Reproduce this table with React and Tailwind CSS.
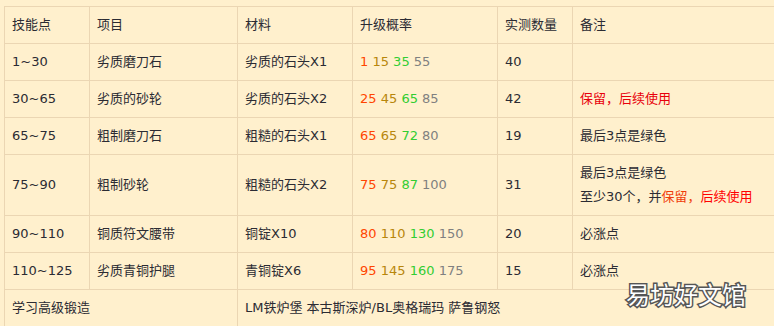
import React from "react";

const O = "text-[#ff4500]";
const Y = "text-[#b8860b]";
const G = "text-[#32cd32]";
const Gr = "text-[#808080]";
const R = "text-[#e8000b]";

function Prob({ v }) {
  return (
    <span>
      <span className={O}>{v[0]}</span> <span className={Y}>{v[1]}</span>{" "}
      <span className={G}>{v[2]}</span> <span className={Gr}>{v[3]}</span>
    </span>
  );
}

const rows = [
  ["1~30", "劣质磨刀石", "劣质的石头X1", ["1", "15", "35", "55"], "40", null],
  ["30~65", "劣质的砂轮", "劣质的石头X2", ["25", "45", "65", "85"], "42", <span className={R}>保留，后续使用</span>],
  ["65~75", "粗制磨刀石", "粗糙的石头X1", ["65", "65", "72", "80"], "19", "最后3点是绿色"],
  [
    "75~90",
    "粗制砂轮",
    "粗糙的石头X2",
    ["75", "75", "87", "100"],
    "31",
    <div>
      <div>最后3点是绿色</div>
      <div>
        至少30个，并<span className="text-[#f03c0a]">保留，</span>
        <span className="text-[#ff0000]">后续使用</span>
      </div>
    </div>,
  ],
  ["90~110", "铜质符文腰带", "铜锭X10", ["80", "110", "130", "150"], "20", "必涨点"],
  ["110~125", "劣质青铜护腿", "青铜锭X6", ["95", "145", "160", "175"], "15", "必涨点"],
];

const td = "border border-[#ebd6b3] pl-[7px] pr-1 py-[6px] align-middle";

export default function App() {
  return (
    <div
      className="relative w-[774px] h-[326px] overflow-hidden bg-[#fff0cd] pl-[4px] pt-[6px] text-[13px] leading-[24px] text-[#2b2b33]"
      style={{ fontFamily: '"DejaVu Sans", "Noto Sans CJK SC", sans-serif' }}
    >
      <table className="table-fixed border-collapse w-[800px]">
        <colgroup>
          <col className="w-[85px]" />
          <col className="w-[148px]" />
          <col className="w-[115px]" />
          <col className="w-[145px]" />
          <col className="w-[75px]" />
          <col className="w-[232px]" />
        </colgroup>
        <tbody>
          <tr>
            <td className={td}>技能点</td>
            <td className={td}>项目</td>
            <td className={td}>材料</td>
            <td className={td}>升级概率</td>
            <td className={td}>实测数量</td>
            <td className={td}>备注</td>
          </tr>
          {rows.map((r, i) => (
            <tr key={i}>
              <td className={td}>{r[0]}</td>
              <td className={td}>{r[1]}</td>
              <td className={td}>{r[2]}</td>
              <td className={td}>
                <Prob v={r[3]} />
              </td>
              <td className={td}>{r[4]}</td>
              <td className={td}>{r[5]}</td>
            </tr>
          ))}
          <tr>
            <td className={td} colSpan={2}>学习高级锻造</td>
            <td className={td} colSpan={4}>LM铁炉堡 本古斯深炉/BL奥格瑞玛 萨鲁钢怒</td>
          </tr>
          <tr>
            <td className={td}>&nbsp;</td>
            <td className={td}>&nbsp;</td>
            <td className={td}>&nbsp;</td>
            <td className={td}>&nbsp;</td>
            <td className={td}>&nbsp;</td>
            <td className={td}>&nbsp;</td>
          </tr>
        </tbody>
      </table>
      <div
        className="absolute left-[626px] top-[279px] text-[24px] leading-[30px] text-white tracking-[0px] [-webkit-text-stroke:3px_#555] [paint-order:stroke_fill]"
        style={{ fontFamily: '"Noto Sans CJK SC", sans-serif' }}
      >
        易坊好文馆
      </div>
    </div>
  );
}
